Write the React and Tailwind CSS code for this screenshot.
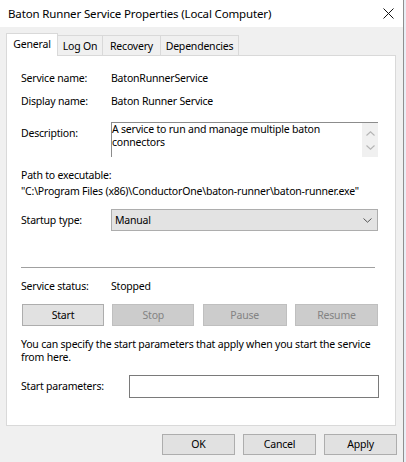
export default function App() {
  const tabs = [
    { label: "Log On", w: "w-[46px]" },
    { label: "Recovery", w: "w-[59px]" },
    { label: "Dependencies", w: "w-[79px]" },
  ];
  return (
    <div className="w-[406px] h-[462px] flex bg-[#e8eef5] font-['Noto_Sans',sans-serif] text-[10.5px] tracking-[-0.2px] leading-[13px] text-black overflow-hidden whitespace-nowrap">
      <div className="w-[404px] h-full flex flex-col bg-[#f0f0f0] border-r border-[#8f8f8f]">
        {/* Title bar */}
        <div className="h-[27px] shrink-0 bg-white flex items-center justify-between pl-[8px] pr-[9px]">
          <span className="text-[11.5px] tracking-[-0.15px] leading-[14px]">Baton Runner Service Properties (Local Computer)</span>
          <svg width="11" height="11" viewBox="0 0 11 11" className="mb-[1px]">
            <path d="M0.5 0.5 L10.5 10.5 M10.5 0.5 L0.5 10.5" stroke="#111" strokeWidth="1" fill="none" />
          </svg>
        </div>

        <div className="flex flex-col pt-[6px] pl-[6px] pr-[6px]">
          {/* Tabs */}
          <div className="flex items-end h-[22px]">
            <div className="relative z-10 w-[52px] h-[23px] -mb-px bg-white border border-b-0 border-[#d9d9d9] flex items-start justify-center pt-[4px]">
              General
            </div>
            {tabs.map((t) => (
              <div
                key={t.label}
                className={`${t.w} h-[20px] -ml-px bg-[#f0f0f0] border border-b-0 border-[#d9d9d9] flex items-center justify-center pt-[1px]`}
              >
                {t.label}
              </div>
            ))}
          </div>

          {/* Panel */}
          <div className="h-[371px] mr-[1px] bg-white border border-[#d9d9d9] flex flex-col pl-[14px] pt-[16px]">
            <div className="flex items-center h-[13px]">
              <span className="w-[90px]">Service name:</span>
              <span>BatonRunnerService</span>
            </div>
            <div className="flex items-center h-[13px] mt-[10px]">
              <span className="w-[90px]">Display name:</span>
              <span>Baton Runner Service</span>
            </div>
            <div className="flex items-start mt-[14px]">
              <span className="w-[90px] pt-[5px]">Description:</span>
              <div className="w-[267px] h-[35px] flex border-t border-l border-[#8c8c8c] bg-white">
                <div className="flex-1">
                  A service to run and manage multiple baton
                  <br />
                  connectors
                </div>
                <div className="w-[16px] bg-[#f0f0f0] flex flex-col items-center justify-around py-[3px]">
                  <svg width="9" height="5" viewBox="0 0 9 5">
                    <path d="M0.5 4.5 L4.5 0.8 L8.5 4.5" stroke="#b4b4b4" strokeWidth="1.1" fill="none" />
                  </svg>
                  <svg width="9" height="5" viewBox="0 0 9 5">
                    <path d="M0.5 0.5 L4.5 4.2 L8.5 0.5" stroke="#b4b4b4" strokeWidth="1.1" fill="none" />
                  </svg>
                </div>
              </div>
            </div>
            <div className="mt-[10px] leading-[16px]">Path to executable:</div>
            <div className="leading-[16px]">"C:\Program Files (x86)\ConductorOne\baton-runner\baton-runner.exe"</div>
            <div className="flex items-center mt-[10px]">
              <span className="w-[90px]">Startup type:</span>
              <div className="w-[267px] h-[22px] bg-[#e3e3e3] border border-[#adadad] flex items-center justify-between pl-[3px] pr-[5px]">
                <span>Manual</span>
                <svg width="9" height="5" viewBox="0 0 9 5">
                  <path d="M0.5 0.5 L4.5 4.2 L8.5 0.5" stroke="#555" strokeWidth="1" fill="none" />
                </svg>
              </div>
            </div>

            <div className="w-[354px] h-px bg-[#a0a0a0] mt-[36px]" />

            <div className="flex items-center h-[13px] mt-[12px]">
              <span className="w-[90px]">Service status:</span>
              <span>Stopped</span>
            </div>
            <div className="w-[356px] ml-[1px] flex justify-between mt-[11px]">
              <div className="w-[82px] h-[22px] bg-[#e1e1e1] border border-[#adadad] flex items-center justify-center">Start</div>
              <div className="w-[82px] h-[22px] bg-[#cccccc] border border-[#bfbfbf] text-[#838383] flex items-center justify-center">Stop</div>
              <div className="w-[84px] h-[22px] bg-[#cccccc] border border-[#bfbfbf] text-[#838383] flex items-center justify-center">Pause</div>
              <div className="w-[83px] h-[22px] bg-[#cccccc] border border-[#bfbfbf] text-[#838383] flex items-center justify-center">Resume</div>
            </div>
            <div className="mt-[12px]">
              You can specify the start parameters that apply when you start the service
              <br />
              from here.
            </div>
            <div className="flex items-center mt-[11px]">
              <span className="w-[108px]">Start parameters:</span>
              <div className="w-[250px] h-[23px] bg-white border border-[#7a7a7a]" />
            </div>
          </div>

          {/* Bottom buttons */}
          <div className="flex justify-end gap-[8px] mt-[8px]">
            <div className="w-[73px] h-[21px] bg-[#e1e1e1] border border-[#adadad] flex items-center justify-center">OK</div>
            <div className="w-[73px] h-[21px] bg-[#e1e1e1] border border-[#adadad] flex items-center justify-center">Cancel</div>
            <div className="w-[73px] h-[21px] bg-[#e1e1e1] border border-[#adadad] flex items-center justify-center">Apply</div>
          </div>
        </div>
      </div>
    </div>
  );
}
